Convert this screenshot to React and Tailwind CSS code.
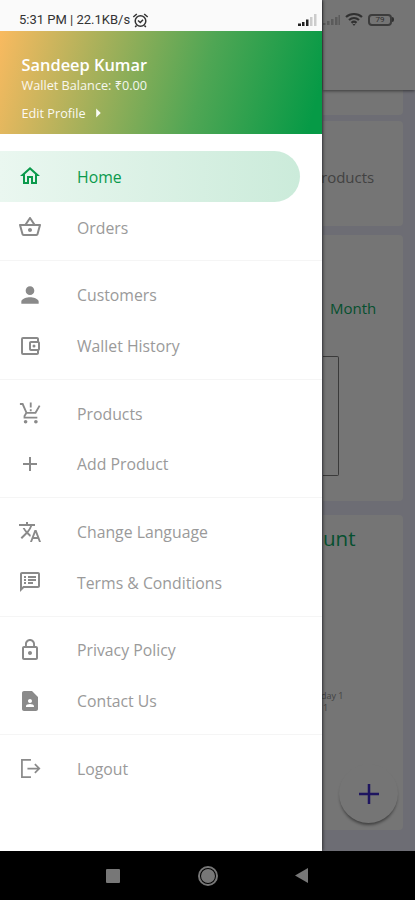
import {
    MdAdd,
    MdArrowRight,
    MdContactPage,
    MdLockOutline,
    MdOutlineAccountBalanceWallet,
    MdOutlineHome,
    MdOutlineShoppingBasket,
    MdOutlineSpeakerNotes,
    MdPerson,
    MdTranslate
} from "react-icons/md";

function CartIcon({size = 24}) {
    return (
        <svg width={size} height={size} viewBox="0 0 24 24" fill="none" stroke="currentColor" strokeWidth="2">
            <path d="M1 2.200h3l4.200 9.600h9.800L22.500 4"/>
            <path d="M8 12L6 15.200v1.800h14"/>
            <path d="M12.800 0.500v5.500M12.800 8v2"/>
            <circle cx="7.200" cy="21.500" r="2" fill="currentColor" stroke="none"/>
            <circle cx="18.400" cy="21.500" r="2" fill="currentColor" stroke="none"/>
        </svg>
    );
}

function LogoutIcon({size = 24}) {
    return (
        <svg width={size} height={size} viewBox="0 0 24 24" fill="none" stroke="currentColor" strokeWidth="2">
            <path d="M12.500 2.200H2.200v19.600h10.300M8.500 12h13M17 7l5 5-5 5"/>
        </svg>
    );
}

const groups = [
    [
        {label: "Home", icon: MdOutlineHome, active: true},
        {label: "Orders", icon: MdOutlineShoppingBasket}
    ],
    [
        {label: "Customers", icon: MdPerson, size: 26},
        {label: "Wallet History", icon: MdOutlineAccountBalanceWallet}
    ],
    [
        {label: "Products", icon: CartIcon, size: 22},
        {label: "Add Product", icon: MdAdd}
    ],
    [
        {label: "Change Language", icon: MdTranslate},
        {label: "Terms & Conditions", icon: MdOutlineSpeakerNotes}
    ],
    [
        {label: "Privacy Policy", icon: MdLockOutline},
        {label: "Contact Us", icon: MdContactPage, size: 24}
    ],
    [
        {label: "Logout", icon: LogoutIcon, size: 21}
    ]
];

function MenuItem({item}) {
    const Icon = item.icon;
    return (
        <a className={`flex items-center h-[50.75px] w-[300px] rounded-r-full text-[15.8px] ${item.active ? "bg-linear-to-r from-[#eaf7f0] to-[#cbebda] text-[#0b9a4c]" : "text-[#9a9a9a]"}`}>
            <span className={`w-[60px] flex justify-center ${item.active ? "" : "text-[#8a8a8a]"}`}><Icon size={item.size || 24}/></span>
            <span className="ml-[17px] pt-[2.5px]">{item.label}</span>
        </a>
    );
}

function SignalBars() {
    return (
        <svg width="19" height="12" viewBox="0 0 19 12">
            <path d="M0 9.500h3V12H0zM4 8h2.500v4H4zM8 5.500h2.500V12H8z" fill="#222"/>
            <path d="M12 3h2.500v9H12zM16 0h2.500v12H16z" fill="#ccc"/>
        </svg>
    );
}

function Drawer() {
    return (
        <aside className="absolute left-0 top-0 h-full w-[322px] bg-white shadow-[1px_0_3px_rgba(0,0,0,0.55)] flex flex-col">
            <div className="h-[31px] bg-[#fafafa] flex items-center pl-[19px] pr-[5px] pt-[9px] justify-between text-[#333]">
                <div className="flex items-center gap-[2px] text-[13px] font-[Roboto,sans-serif] whitespace-nowrap">
                    5:31 PM | 22.1KB/s
                    <svg width="17" height="15" viewBox="0 0 17 15" fill="none" stroke="currentColor" strokeWidth="1.500">
                        <circle cx="8.500" cy="8" r="5.300"/>
                        <path d="M1.300 4L4.800 1M15.700 4l-3.500-3M6 7.500l2.300 2L11 6.800M4.500 12.500l-1.300 1.600M12.500 12.500l1.300 1.600"/>
                    </svg>
                </div>
                <SignalBars/>
            </div>
            <div className="h-[103px] bg-[linear-gradient(105deg,#f9ba60_0%,#4fa654_62%,#069a46_96%)] text-white pl-[21.5px] pt-[22px]">
                <h1 className="text-[16.4px] leading-[24px] font-semibold">Sandeep Kumar</h1>
                <p className="text-[12.7px] leading-[16px] text-white/90">Wallet Balance: ₹0.00</p>
                <div className="mt-[9px] h-[22px] flex items-center gap-px text-[12.7px] leading-[17px] text-white/95">
                    Edit Profile
                    <MdArrowRight size={22}/>
                </div>
            </div>
            <nav className="flex flex-col pt-[17px]">
                {groups.map((group, i) => (
                    <div key={i}>
                        {i > 0 && <div className="h-[16.9px] flex items-center">
                            <div className="h-px w-full bg-[#f5f5f5]"/>
                        </div>}
                        {group.map(item => <MenuItem key={item.label} item={item}/>)}
                    </div>
                ))}
            </nav>
        </aside>
    );
}

function Dashboard() {
    return (
        <main className="h-full bg-[#6d6d74] flex flex-col pl-[323px] text-[#424242]">
            <header className="h-[90px] shrink-0 bg-[#757575] shadow-[0_1px_3px_rgba(0,0,0,0.5)] z-0 pt-[12px]">
                <div className="flex items-center gap-[4px] text-[#303030]">
                    <svg width="18" height="14" viewBox="0 0 18 14">
                        <path d="M0 10h2.500v2H0zM4 8h2.500v4H4zM8 6h2.500v6H8zM12 4h2.500v8H12zM15.500 2H17v10h-1.500z" fill="#5b5b5b"/>
                    </svg>
                    <svg width="18" height="15" viewBox="0 0 18 15" fill="none" stroke="currentColor" strokeWidth="2.200">
                        <path d="M1 5c4.600-4 11.400-4 16 0M4 8c3-2.600 7-2.600 10 0M6.500 10.800c1.500-1.300 3.500-1.300 5 0"/>
                        <path d="M7.500 12h3L9 14z" fill="currentColor" stroke="none"/>
                    </svg>
                    <div className="flex items-center ml-px">
                        <div className="w-[24px] h-[12px] rounded-[4px] border-2 border-[#3c3c3c] text-[8px] leading-none flex items-center justify-center font-[Roboto,sans-serif]">79</div>
                        <div className="w-[2px] h-[5px] rounded-r bg-[#303030]"/>
                    </div>
                </div>
            </header>
            <section className="h-[25px] shrink-0 mr-[12px] bg-[#757575] rounded-br"/>
            <section className="h-[105px] shrink-0 mt-[6px] mr-[12px] bg-[#757575] rounded-r flex items-center text-[15px]">
                <span className="mt-[8px] -ml-[2px]">roducts</span>
            </section>
            <section className="h-[266px] shrink-0 mt-[9px] mr-[12px] bg-[#757575] rounded-r pt-[62px]">
                <p className="ml-[7px] text-[15px] leading-[22px] text-[#06502f]">Month</p>
                <div className="mt-[37px] w-[16px] h-[120px] border border-l-0 border-[#3a3a3a] rounded-r-[2px]"/>
            </section>
            <section className="h-[315px] shrink-0 mt-[14px] mr-[12px] bg-[#757575] rounded-r pt-[9px]">
                <p className="text-[20.5px] leading-[28px] text-[#06502f]">unt</p>
                <div className="mt-[137px] text-[9px] leading-[12px] -ml-[4px]">
                    <p className="pl-[2px] leading-[13px]">day 1</p>
                    <p className="pl-[4px]">1</p>
                </div>
            </section>
            <button className="absolute left-[339px] top-[764px] w-[59px] h-[59px] rounded-full bg-[#757575] shadow-[0_3px_3px_-1px_rgba(0,0,0,0.45)] flex items-center justify-center">
                <svg width="20" height="20" viewBox="0 0 20 20" stroke="#1e1560" strokeWidth="2.500">
                    <path d="M10 0v20M0 10h20"/>
                </svg>
            </button>
        </main>
    );
}

function NavigationBar() {
    return (
        <div className="h-[49px] bg-black flex items-center text-[#777] pl-[106px]">
            <div className="w-[14px] h-[14px] bg-current rounded-[1px]"/>
            <div className="ml-[78px] w-[20px] h-[20px] rounded-full border-2 border-current flex items-center justify-center">
                <div className="w-[14px] h-[14px] rounded-full bg-current"/>
            </div>
            <svg className="ml-[77px]" width="13" height="15" viewBox="0 0 13 15">
                <path d="M0 7.500L13 0v15z" fill="currentColor"/>
            </svg>
        </div>
    );
}

export default function App() {
    return (
        <div className="w-[415px] h-[900px] overflow-hidden flex flex-col font-['Open_Sans','Noto_Sans',sans-serif]">
            <div className="relative h-[851px] overflow-hidden">
                <Dashboard/>
                <Drawer/>
            </div>
            <NavigationBar/>
        </div>
    );
}
